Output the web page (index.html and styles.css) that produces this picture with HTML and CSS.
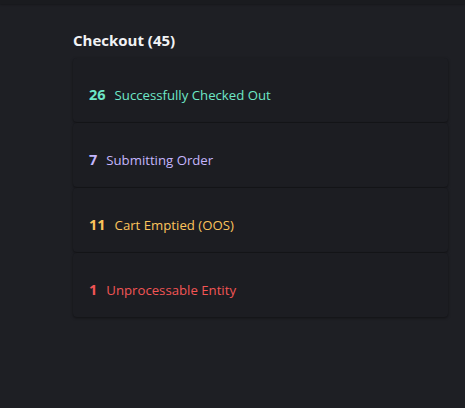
FILE: index.html
```html
<!DOCTYPE html>
<html>
<head>
<meta charset="utf-8">
<link rel="stylesheet" href="styles.css">
</head>
<body>
<div class="topbar"></div>
<section class="panel">
  <h2 class="title">Checkout (45)</h2>
  <div class="list">
    <div class="card"><span class="num teal">26</span><span class="label teal">Successfully Checked Out</span></div>
    <div class="card"><span class="num purple">7</span><span class="label purple">Submitting Order</span></div>
    <div class="card"><span class="num amber">11</span><span class="label amber">Cart Emptied (OOS)</span></div>
    <div class="card"><span class="num red">1</span><span class="label red">Unprocessable Entity</span></div>
  </div>
</section>
</body>
</html>
```
FILE: styles.css
```css
html, body {
  margin: 0;
  padding: 0;
  background: #1e1f24;
  font-family: "Open Sans", "Noto Sans", sans-serif;
  height: 100%;
}
.topbar {
  height: 4px;
  background: #1a1b1f;
  box-shadow: 0 1px 2px rgba(0,0,0,0.25);
}
.panel {
  width: 375px;
  margin-left: 73px;
  padding-top: 26px;
}
.title {
  margin: 0 0 8px 0;
  font-size: 15px;
  font-weight: 700;
  color: #f2f3f5;
  line-height: 20px;
}
.list {
  display: flex;
  flex-direction: column;
  gap: 1px;
}
.card {
  box-sizing: border-box;
  height: 64px;
  background: #1c1d22;
  border-radius: 4px;
  box-shadow: 0 1px 3px rgba(0,0,0,0.45);
  display: flex;
  align-items: center;
  padding: 9px 0 0 16px;
  gap: 9px;
}
.num {
  font-size: 14.5px;
  font-weight: 700;
}
.label {
  font-size: 13.2px;
}
.teal { color: #6ee7c7; }
.purple { color: #c4b5fd; }
.amber { color: #fcc45c; }
.red { color: #f25555; }
```
